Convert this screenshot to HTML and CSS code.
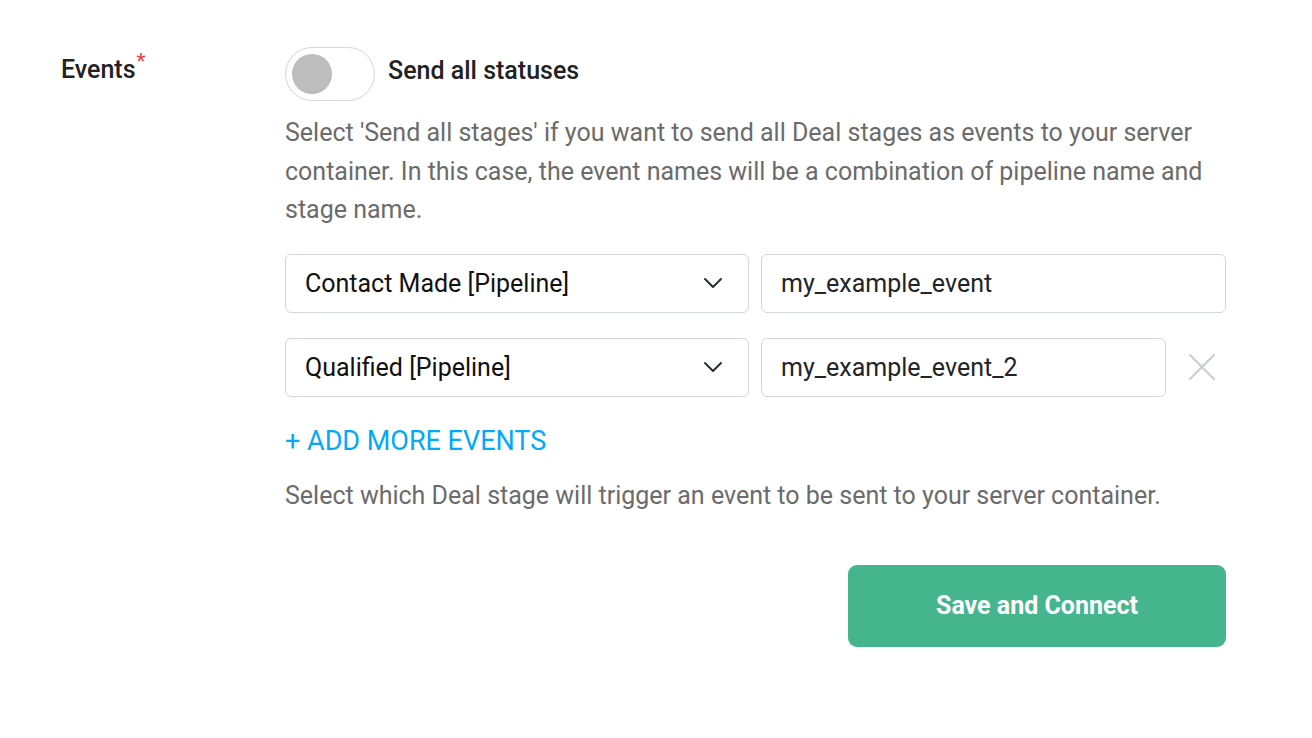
FILE: index.html
```html
<!DOCTYPE html>
<html lang="en">
<head>
  <meta charset="UTF-8">
  <meta name="viewport" content="width=device-width, initial-scale=1.0">
  <title>Events</title>
  <link rel="stylesheet" href="styles.css">
</head>
<body>
  <div class="form-row">
    <div class="form-label">Events<span class="required">*</span></div>

    <div class="form-field">
      <div class="toggle-row">
        <span class="toggle"><span class="toggle-knob"></span></span>
        <span class="toggle-label">Send all statuses</span>
      </div>

      <p class="hint">Select 'Send all stages' if you want to send all Deal stages as events to your server container. In this case, the event names will be a combination of pipeline name and stage name.</p>

      <div class="event-list">
        <div class="event-row">
          <div class="select">
            <span>Contact Made [Pipeline]</span>
            <svg class="chevron" width="20" height="12" viewBox="0 0 20 12"><path d="M2 2l8 8 8-8" fill="none" stroke="#2b2f33" stroke-width="2" stroke-linecap="round" stroke-linejoin="round"/></svg>
          </div>
          <div class="input">my_example_event</div>
        </div>

        <div class="event-row">
          <div class="select">
            <span>Qualified [Pipeline]</span>
            <svg class="chevron" width="20" height="12" viewBox="0 0 20 12"><path d="M2 2l8 8 8-8" fill="none" stroke="#2b2f33" stroke-width="2" stroke-linecap="round" stroke-linejoin="round"/></svg>
          </div>
          <div class="input">my_example_event_2</div>
          <button class="remove" aria-label="Remove">
            <svg width="28" height="28" viewBox="0 0 28 28"><path d="M2 2l24 24M26 2L2 26" stroke="#c9cdd1" stroke-width="2.2" stroke-linecap="round"/></svg>
          </button>
        </div>
      </div>

      <a class="add-more" href="#">+ ADD MORE EVENTS</a>

      <p class="hint help">Select which Deal stage will trigger an event to be sent to your server container.</p>

      <div class="actions">
        <button class="btn-primary">Save and Connect</button>
      </div>
    </div>
  </div>
</body>
</html>
```

FILE: styles.css
```css
body {
  margin: 0;
  font-family: Roboto, "Noto Sans", sans-serif;
  background: #fff;
  color: #222;
}

.form-row {
  display: grid;
  grid-template-columns: 224px 941px;
  padding: 47px 0 0 61px;
}

.form-label {
  font-size: 25px;
  font-weight: 500;
  color: #222;
  line-height: 46px;
}

.required {
  color: #e5484d;
  font-size: 20px;
  vertical-align: top;
  position: relative;
  top: -9px;
  margin-left: 1px;
}

.toggle-row {
  display: flex;
  align-items: center;
  gap: 13px;
  height: 54px;
}

.toggle {
  box-sizing: border-box;
  width: 90px;
  height: 54px;
  border: 1px solid #d3d6da;
  border-radius: 27px;
  background: #fff;
  display: flex;
  align-items: center;
  padding-left: 6px;
}

.toggle-knob {
  width: 40px;
  height: 40px;
  border-radius: 50%;
  background: #bdbdbd;
}

.toggle-label {
  font-size: 25px;
  font-weight: 500;
  color: #222;
  margin-top: -7px;
}

.hint {
  margin: 13px 0 0;
  font-size: 25px;
  line-height: 38.5px;
  color: #6b6b6b;
}

.event-list {
  margin-top: 24px;
  display: flex;
  flex-direction: column;
  gap: 25px;
}

.event-row {
  display: flex;
  gap: 12px;
}

.select,
.input {
  box-sizing: border-box;
  height: 59px;
  border: 1px solid #d3d6da;
  border-radius: 6px;
  display: flex;
  align-items: center;
  padding: 0 19px;
  font-size: 25px;
}

.select {
  width: 464px;
  justify-content: space-between;
  color: #111;
}

.chevron {
  margin-right: 6px;
}

.input {
  flex: 1;
  color: #212529;
}

.remove {
  width: 48px;
  border: 0;
  background: none;
  padding: 0;
  display: flex;
  align-items: center;
  justify-content: center;
}

.add-more {
  display: block;
  margin-top: 29px;
  font-size: 27px;
  line-height: 30px;
  color: #03a9f4;
  text-decoration: none;
}

.hint.help {
  margin-top: 21px;
}

.actions {
  display: flex;
  justify-content: flex-end;
  margin-top: 50px;
}

.btn-primary {
  width: 378px;
  height: 82px;
  border: 0;
  border-radius: 9px;
  background: #45b58e;
  color: #fff;
  font-family: Roboto, "Noto Sans", sans-serif;
  font-size: 25px;
  font-weight: 700;
  padding-bottom: 2px;
}
```
